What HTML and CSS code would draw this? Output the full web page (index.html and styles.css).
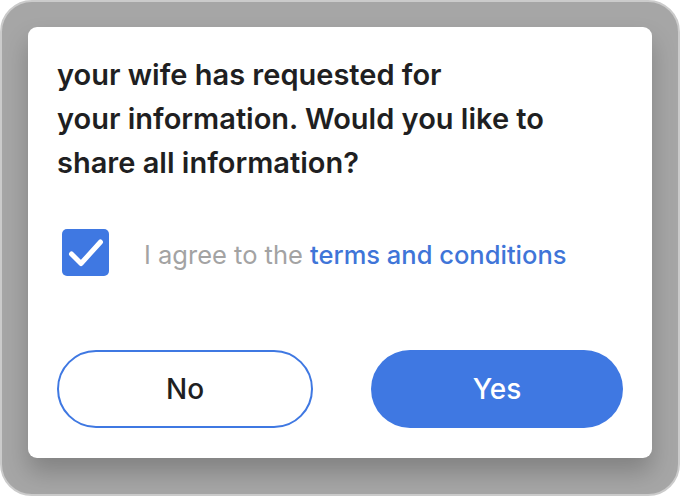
FILE: index.html
```html
<!DOCTYPE html>
<html lang="en">
<head>
    <meta charset="UTF-8">
    <meta name="viewport" content="width=device-width, initial-scale=1.0">
    <title>Share information</title>
    <link rel="stylesheet" href="styles.css">
</head>
<body>
    <div class="frame">
        <div class="dialog">
            <h2 class="question">your wife has requested for<br>your information. Would you like to<br>share all information?</h2>

            <label class="agree">
                <span class="checkbox">
                    <svg width="36" height="30" viewBox="0 0 36 30">
                        <path d="M3.5 16 L13 25.5 L32.5 4" fill="none" stroke="#fff" stroke-width="5" stroke-linecap="round" stroke-linejoin="round"/>
                    </svg>
                </span>
                <span class="agree-text">I agree to the <a href="#">terms and conditions</a></span>
            </label>

            <div class="actions">
                <button class="btn btn-no">No</button>
                <button class="btn btn-yes">Yes</button>
            </div>
        </div>
    </div>
</body>
</html>
```

FILE: styles.css
```css
html, body {
    margin: 0;
    background: #fff;
}
body {
    font-family: Inter, "Noto Sans", sans-serif;
}
.frame {
    box-sizing: border-box;
    width: 680px;
    height: 496px;
    border: 2px solid #cbcbcb;
    border-radius: 32px;
    background: #a6a6a6;
    padding: 25px 26px;
}
.dialog {
    background: #fff;
    border-radius: 9px;
    height: 431px;
    box-sizing: border-box;
    padding: 26px 29px;
    box-shadow: 0 14px 24px rgba(0, 0, 0, 0.22);
}
.question {
    margin: 0;
    font-size: 29px;
    font-weight: 600;
    line-height: 44px;
    color: #1f1f22;
}
.agree {
    display: flex;
    align-items: center;
    gap: 35px;
    margin: 44px 0 0 5px;
}
.checkbox {
    width: 47px;
    height: 47px;
    border-radius: 5px;
    background: #3f78e2;
    display: flex;
    align-items: center;
    justify-content: center;
}
.agree-text {
    font-size: 25.5px;
    color: #a3a3a3;
    padding-top: 3px;
}
.agree-text a {
    color: #3f75d8;
    text-decoration: none;
    font-weight: 500;
}
.actions {
    display: flex;
    gap: 58px;
    margin-top: 74px;
}
.btn {
    flex: 1;
    height: 78px;
    border-radius: 39px;
    font-family: Inter, "Noto Sans", sans-serif;
    font-size: 28px;
    font-weight: 500;
}
.btn-no {
    background: #fff;
    border: 2px solid #3f78e2;
    color: #1f1f22;
}
.btn-yes {
    background: #3f78e2;
    border: none;
    color: #fff;
}
```
